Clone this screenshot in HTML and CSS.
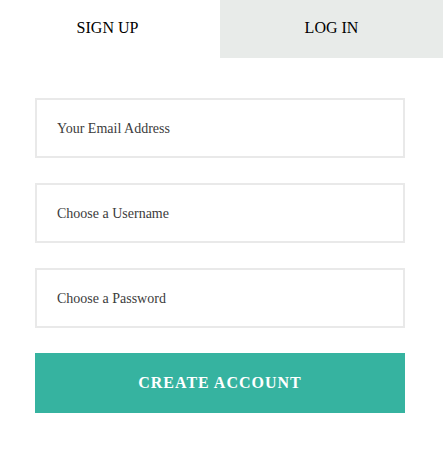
FILE: index.html
```html
<!DOCTYPE html>
<html lang="en">
<head>
<meta charset="utf-8">
<meta name="viewport" content="width=device-width, initial-scale=1">
<title>Sign Up</title>
<link rel="stylesheet" href="styles.css">
</head>
<body>
<nav class="tabs">
  <a class="tab tab-active" href="#signup" aria-current="page">SIGN UP</a>
  <a class="tab" href="#login">LOG IN</a>
</nav>
<form class="form" id="signup">
  <input class="field" type="email" placeholder="Your Email Address" aria-label="Your Email Address">
  <input class="field" type="text" placeholder="Choose a Username" aria-label="Choose a Username">
  <input class="field" type="password" placeholder="Choose a Password" aria-label="Choose a Password">
  <button class="submit" type="submit">CREATE ACCOUNT</button>
</form>
</body>
</html>
```
FILE: styles.css
```css
* {
  box-sizing: border-box;
}

body {
  margin: 0;
  background: #fff;
  color: #000;
  font-family: "Liberation Serif", serif;
}

.tabs {
  display: grid;
  grid-template-columns: 220px 1fr;
}

.tab {
  padding: 18px 0 20px;
  background: #e8ebe9;
  color: #000;
  font-size: 16px;
  line-height: 20px;
  text-align: center;
  text-decoration: none;
}

.tab-active {
  padding-right: 5px;
  background: #fff;
}

.form {
  display: grid;
  gap: 25px;
  padding: 40px 38px 40px 35px;
}

.field {
  width: 100%;
  height: 60px;
  padding: 2px 20px 0;
  border: 2px solid #e9e9e9;
  border-radius: 0;
  background: #fff;
  color: #3c3c3c;
  font-family: inherit;
  font-size: 14px;
}

.field::placeholder {
  color: #3c3c3c;
  opacity: 1;
}

.submit {
  height: 60px;
  border: 0;
  background: #36b3a0;
  color: #fff;
  font-family: inherit;
  font-size: 16px;
  font-weight: bold;
  letter-spacing: 1px;
  cursor: pointer;
}
```
